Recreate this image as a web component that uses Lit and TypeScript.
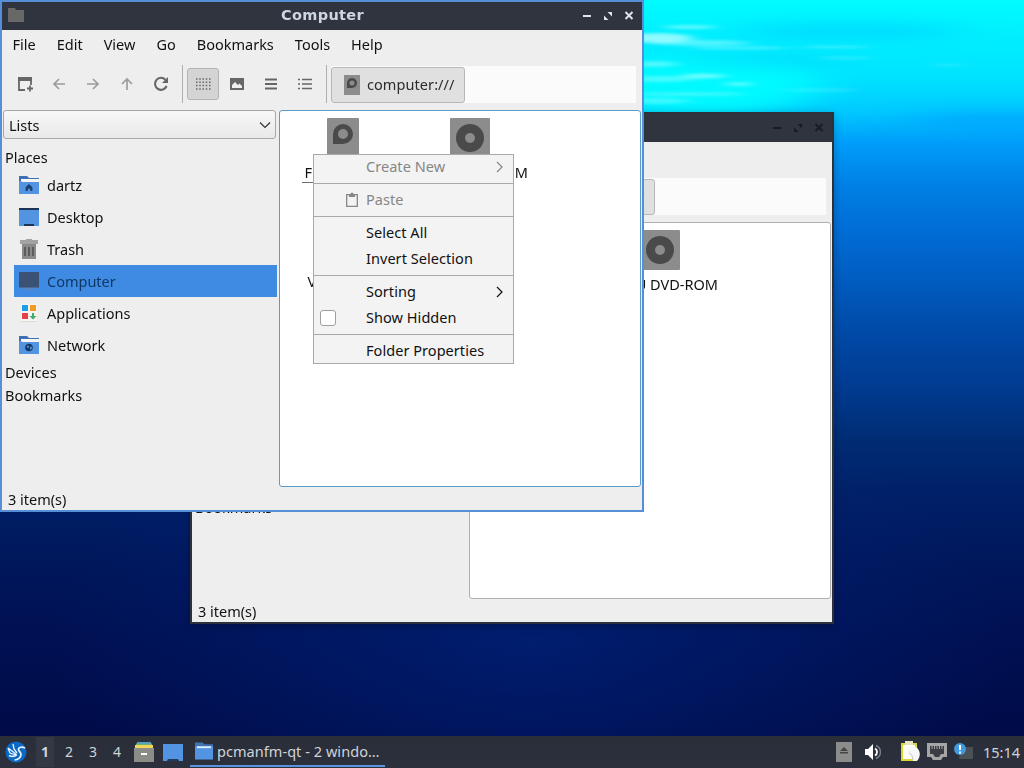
import {html, css, svg, LitElement} from 'lit';
import {customElement, property} from 'lit/decorators.js';
import {classMap} from 'lit/directives/class-map.js';

const folder = (overlay: unknown) => svg`
    <path d="M0 1h8l2 2h10v4H0z" fill="#3f6fb4" />
    <path d="M2 4h18v4H2z" fill="#f4f6fa" />
    <path d="M0 6h2l1 1h17v12H0z" fill="#5294e2" />
    ${overlay}
`;

const PLACES = [
    {
        name: 'dartz',
        icon: folder(svg`<path d="M10 9l-3.4 3.3V16h2.2v-2.2h2.4V16h2.2v-3.7z" fill="#1d4070" />`)
    },
    {
        name: 'Desktop',
        icon: svg`
            <path d="M0 1h20v18H0z" fill="#5294e2" />
            <path d="M0 1h20v2H0zM5 17h10v2H5z" fill="#1d3555" />
        `
    },
    {
        name: 'Trash',
        icon: svg`
            <path d="M7 0h6v1h6v4H1V1h6z" fill="#a3a3a3" />
            <path d="M3 5h14v15H3z" fill="#8a8a8a" />
            <path d="M6 8v9M10 8v9M14 8v9" stroke="#555" stroke-width="1.700" />
        `
    },
    {
        name: 'Computer',
        selected: true,
        icon: svg`
            <path d="M0 1h20v15H0z" fill="#3c5274" />
            <path d="M0 16h20v1H0z" fill="#4a6a98" />
            <path d="M5 17h10v1.500H5z" fill="#5e86bd" />
        `
    },
    {
        name: 'Applications',
        icon: svg`
            <path d="M2 1h16v18H2z" fill="#f6f4f0" />
            <path d="M2 18h16v1H2z" fill="#dedbd4" />
            <path d="M3 2h6v6H3z" fill="#1a9fe8" />
            <path d="M11 2h6v6h-6z" fill="#f29a25" />
            <path d="M3 10h6v6H3z" fill="#e8404a" />
            <path d="M13 10h2v3h2.500L14 16.500 10.500 13H13z" fill="#3fae6a" />
        `
    },
    {
        name: 'Network',
        icon: folder(svg`
            <circle cx="10" cy="12.500" r="3.800" fill="#173862" />
            <path d="M8 10.500l2 .5-.5 2-1.500-.5zM11 12l2-.5-.5 2.500-1.500 1z" fill="#5294e2" />
        `)
    }
];

const NAV_ICONS = [
    svg`
        <path d="M1 1h14v4H1z" />
        <path d="M2 4v10h6M14 4v5" fill="none" stroke="currentColor" stroke-width="1.800" />
        <path d="M13 9.500v6M10 12.500h6" stroke="currentColor" stroke-width="1.800" />
    `,
    svg`<path d="M14 8H3M8 3L3 8l5 5" fill="none" stroke="currentColor" stroke-width="1.700" />`,
    svg`<path d="M2 8h11M8 3l5 5-5 5" fill="none" stroke="currentColor" stroke-width="1.700" />`,
    svg`<path d="M8 14V3M3 8l5-5 5 5" fill="none" stroke="currentColor" stroke-width="1.700" />`,
    svg`
        <path d="M13.600 10a6 6 0 1 1-1.200-6.300" fill="none" stroke="currentColor" stroke-width="2.100" />
        <path d="M15 1v6H9z" />
    `
];

const VIEW_ICONS = [
    svg`<path d="M1 3h14.500M1 6.300h14.500M1 9.600h14.500M1 12.900h14.500" stroke="currentColor" stroke-width="1.500" stroke-dasharray="1.500 1.750" />`,
    svg`<path fill-rule="evenodd" d="M1 2h14v12H1zM3 12h10v-2l-2.500-2.500L9 9 6 6 3 9z" />`,
    svg`<path d="M2 3.500h12M2 8h12M2 12.500h12" stroke="currentColor" stroke-width="2" />`,
    svg`<path d="M1 3.500h2M1 8h2M1 12.500h2M5 3.500h10M5 8h10M5 12.500h10" stroke="currentColor" stroke-width="1.700" />`
];

@customElement('file-window')
export class FileWindow extends LitElement {
    @property({type: Boolean, reflect: true}) active = false;

    render() {
        return html`
            <div class="titlebar">
                <svg class="app-icon" viewBox="0 0 16 14"><path d="M0 0h7l1 2h8v12H0z" fill="#686868" /></svg>
                <span class="title">Computer</span>
                <svg class="controls" viewBox="0 0 54 12">
                    <path d="M1 6h8M43.500 2l7 7M50.500 2l-7 7" stroke="currentColor" stroke-width="2" />
                    <path d="M25.500 2H30v4.500zM22 5.500L26.500 10H22z" fill="currentColor" />
                </svg>
            </div>
            <div class="menubar">
                ${['File', 'Edit', 'View', 'Go', 'Bookmarks', 'Tools', 'Help'].map((label) => html`<span>${label}</span>`)}
            </div>
            <div class="toolbar">
                ${NAV_ICONS.map(
                    (icon, i) => html`
                        <div class=${classMap({tool: true, disabled: i > 0 && i < 4})}>
                            <svg viewBox="0 0 16 16">${icon}</svg>
                        </div>
                    `
                )}
                <div class="separator"></div>
                ${VIEW_ICONS.map(
                    (icon, i) => html`
                        <div class=${classMap({tool: true, pressed: i === 0})}>
                            <svg viewBox="0 0 16 16">${icon}</svg>
                        </div>
                    `
                )}
                <div class="separator"></div>
                <div class="path">
                    <div class="crumb">
                        <svg viewBox="0 0 16 20">
                            <path d="M0 0h16v20H0z" fill="#8c8c8c" />
                            <path d="M3 13V8a5 5 0 1 1 5 5z" fill="#4a4a4a" />
                            <circle cx="8" cy="8" r="2.500" fill="#8c8c8c" />
                        </svg>
                        <span>computer:///</span>
                    </div>
                </div>
            </div>
            <div class="body">
                <div class="side">
                    <div class="combo">
                        <span>Lists</span>
                        <svg viewBox="0 0 12 8"><path d="M1 1.500l5 5 5-5" fill="none" stroke="#333" stroke-width="1.200" /></svg>
                    </div>
                    <div class="group">Places</div>
                    ${PLACES.map(
                        (place) => html`
                            <div class=${classMap({place: true, selected: !!place.selected})}>
                                <svg viewBox="0 0 20 20">${place.icon}</svg>
                                <span>${place.name}</span>
                            </div>
                        `
                    )}
                    <div class="group">Devices</div>
                    <div class="group">Bookmarks</div>
                </div>
                <div class="view">
                    <div class="item">
                        <svg viewBox="0 0 40 40">
                            <rect x="4" width="32" height="40" rx="1" fill="#8c8c8c" />
                            <path d="M10 26V16a10 10 0 1 1 10 10z" fill="#4a4a4a" />
                            <circle cx="20" cy="16" r="5" fill="#8c8c8c" />
                        </svg>
                        <span class="focused">File System</span>
                    </div>
                    <div class="item">
                        <svg viewBox="0 0 40 40">
                            <rect width="40" height="40" rx="1" fill="#8c8c8c" />
                            <circle cx="20" cy="20" r="14" fill="#4a4a4a" />
                            <circle cx="20" cy="20" r="5" fill="#8c8c8c" />
                        </svg>
                        <span class="drive">QEMU DVD-ROM</span>
                    </div>
                    <div class="item">
                        <svg viewBox="0 0 40 40"><rect x="4" width="32" height="40" rx="1" fill="#8c8c8c" /></svg>
                        <span>VM Drives</span>
                    </div>
                </div>
            </div>
            <div class="status">3 item(s)</div>
        `;
    }

    static styles = [
        css`
            :host {
                box-sizing: border-box;
                display: block;
                width: 644px;
                height: 512px;
                border: 2px solid #2d313c;
                background: #eeeeef;
                color: #111;
                overflow: hidden;
            }

            :host([active]) {
                border-color: #568fd8;
            }

            svg {
                display: block;
                flex: none;
            }

            .titlebar {
                display: flex;
                align-items: center;
                height: 28px;
                background: #2f343f;
                color: #181b22;
            }

            :host([active]) .titlebar {
                color: #dce4ee;
            }

            .app-icon {
                width: 16px;
                height: 14px;
                margin: 0 0 2px 6px;
            }

            .title {
                flex: 1;
                padding: 0 0 2px 39px;
                text-align: center;
                font: bold 14.500px 'DejaVu Sans', sans-serif;
                letter-spacing: 0.35px;
                color: #cdd6e2;
            }

            .controls {
                width: 54px;
                height: 12px;
                margin: 0 6px 1px 0;
            }

            .menubar {
                display: flex;
                align-items: center;
                gap: 21px;
                height: 28px;
                padding: 0 0 2px 10.500px;
            }

            .toolbar {
                display: flex;
                align-items: center;
                gap: 2px;
                height: 48px;
                padding: 0 6px 0 7px;
            }

            .tool {
                box-sizing: border-box;
                display: grid;
                place-items: center;
                width: 32px;
                height: 32px;
                border-radius: 3px;
                color: #666;
            }

            .tool svg {
                width: 16px;
                height: 16px;
                fill: currentColor;
            }

            .tool.disabled {
                color: #9c9c9c;
            }

            .tool.pressed {
                border: 1px solid #b4b4b4;
                background: #d4d4d4;
            }

            .separator {
                width: 1px;
                height: 38px;
                margin: 0 2px 0 3px;
                background: #b0b0b0;
            }

            .path {
                flex: 1;
                height: 37px;
                background: #fbfbfb;
            }

            .crumb {
                box-sizing: border-box;
                display: flex;
                align-items: center;
                gap: 7px;
                width: 134px;
                height: 36px;
                margin-top: 1px;
                padding-left: 12px;
                border: 1px solid #b8b8b8;
                border-radius: 3px;
                background: #e0e0e0;
                color: #2c2c2c;
            }

            .crumb svg {
                width: 16px;
                height: 20px;
            }

            .crumb span {
                padding-bottom: 2px;
                letter-spacing: 0.07px;
            }

            .body {
                display: flex;
                gap: 2px;
                height: 377px;
                margin-top: 2px;
                padding: 0 1px;
            }

            .side {
                width: 274px;
            }

            .combo {
                box-sizing: border-box;
                display: flex;
                align-items: center;
                justify-content: space-between;
                width: 273px;
                height: 29px;
                margin-bottom: 7px;
                padding: 0 4px 0 5px;
                border: 1px solid #a8a8a8;
                border-radius: 3px;
                background: linear-gradient(#f7f7f7, #e9e9e9);
            }

            .combo svg {
                width: 12px;
                height: 8px;
            }

            .group {
                padding-left: 2px;
                line-height: 23px;
            }

            .place {
                display: flex;
                align-items: center;
                gap: 8px;
                height: 32px;
                margin-left: 11px;
                padding-left: 5px;
            }

            .place svg {
                width: 20px;
                height: 20px;
            }

            .place.selected {
                background: #3f8be3;
                color: #103866;
            }

            .view {
                box-sizing: border-box;
                display: grid;
                grid-template-columns: 125px 129px;
                grid-auto-rows: 109px;
                align-content: start;
                width: 362px;
                padding-top: 7px;
                border: 1px solid #b0b0b0;
                border-radius: 3px;
                background: #fff;
            }

            :host([active]) .view {
                border-color: #5b9bc9;
            }

            .item {
                display: flex;
                flex-direction: column;
                align-items: center;
                gap: 5px;
            }

            .item svg {
                width: 40px;
                height: 40px;
            }

            .item span {
                height: 19px;
                line-height: 19px;
                letter-spacing: 0.15px;
                white-space: nowrap;
            }

            .item .focused {
                padding: 0 2px;
                border-bottom: 1px solid #68707a;
                letter-spacing: 0;
            }

            .item .drive {
                padding-left: 2px;
                letter-spacing: 0;
            }

            .status {
                padding-left: 6px;
                line-height: 25px;
            }
        `
    ];
}

const arrow = html`
    <svg class="arrow" viewBox="0 0 8 12"><path d="M1 1l5 5-5 5" fill="none" stroke="currentColor" stroke-width="1.200" /></svg>
`;

@customElement('context-menu')
export class ContextMenu extends LitElement {
    render() {
        return html`
            <div class="entry disabled"><span class="mark"></span><span class="label">Create New</span>${arrow}</div>
            <hr />
            <div class="entry disabled">
                <span class="mark paste">
                    <svg viewBox="0 0 14 16">
                        <path d="M1.700 2.700h10.600v11.600H1.700z" fill="none" stroke="currentColor" stroke-width="1.300" />
                        <path d="M4 2h1.500a1.500 1.500 0 0 1 3 0H10v3H4z" />
                    </svg>
                </span>
                <span class="label">Paste</span>
            </div>
            <hr />
            <div class="entry"><span class="mark"></span><span class="label">Select All</span></div>
            <div class="entry"><span class="mark"></span><span class="label">Invert Selection</span></div>
            <hr />
            <div class="entry"><span class="mark"></span><span class="label">Sorting</span>${arrow}</div>
            <div class="entry">
                <span class="mark"><span class="check"></span></span><span class="label">Show Hidden</span>
            </div>
            <hr />
            <div class="entry"><span class="mark"></span><span class="label">Folder Properties</span></div>
        `;
    }

    static styles = [
        css`
            :host {
                display: block;
                width: 201px;
                height: 210px;
                background: #f3f3f4;
                box-shadow: inset 0 0 0 1px #a9a9a9;
                color: #111;
            }

            .entry {
                display: flex;
                align-items: center;
                height: 26px;
            }

            .disabled {
                color: #868686;
            }

            hr {
                height: 1px;
                margin: 3px 0;
                border: 0;
                background: #a9a9a9;
            }

            .mark {
                display: flex;
                width: 46px;
                padding-left: 7px;
            }

            .label {
                padding-bottom: 2px;
                letter-spacing: 0.05px;
            }

            .paste {
                width: 21px;
                padding-left: 32px;
            }

            .paste svg {
                width: 14px;
                height: 16px;
                fill: currentColor;
            }

            .check {
                box-sizing: border-box;
                width: 16px;
                height: 16px;
                border: 1px solid #a0a0a0;
                border-radius: 3px;
                background: #fff;
            }

            .arrow {
                width: 8px;
                height: 12px;
                margin: 0 10px 0 auto;
            }
        `
    ];
}

@customElement('task-panel')
export class TaskPanel extends LitElement {
    render() {
        return html`
            <svg class="start" viewBox="0 0 22 22">
                <circle cx="11" cy="11" r="10.500" fill="#0b68c4" />
                <path d="M3 7l8 6M3 7l2 5 6 2M8 3l1 5 3 4" fill="none" stroke="#e8f3ff" stroke-width="1.300" />
                <path d="M20 7c-3-1.500-6.500-1-6.500 1.500 0 2 2.500 2.500 2.500 5 0 3-3 5.500-6.500 5.500M4 14.500c3 1.500 6 1 8-1" fill="none" stroke="#e8f3ff" stroke-width="1.700" />
            </svg>
            <div class="desks">
                ${[1, 2, 3, 4].map((n) => html`<span class=${classMap({desk: true, current: n === 1})}>${n}</span>`)}
            </div>
            <svg class="launcher" viewBox="0 0 20 20">
                <path d="M3 0h14v3H3z" fill="#4f9bd9" />
                <path d="M2 1.500h16V5H2z" fill="#6bb36b" />
                <path d="M1 3h18v5H1z" fill="#f2d45c" />
                <path d="M0 6h20v14H0z" fill="#8b8b87" />
                <path d="M7 11h6v2H7z" fill="#fff" />
            </svg>
            <svg class="launcher" viewBox="0 0 20 20">
                <path d="M0 2h20v17h-4l-1-2H5l-1 2H0z" fill="#5294e2" />
                <path d="M5 17h10v2H5z" fill="#243a5a" />
            </svg>
            <div class="task">
                <svg viewBox="0 0 20 20">
                    <path d="M0 1h8l2 2h9v4H0z" fill="#4172b4" />
                    <path d="M0 5h19v14H0z" fill="#5294e2" />
                    <path d="M2 5h15v2H2z" fill="#dcebfb" />
                </svg>
                <span>pcmanfm-qt - 2 windo…</span>
            </div>
            <div class="tray">
                <svg class="eject" viewBox="0 0 16 20">
                    <path d="M0 0h16v20H0z" fill="#8c8c8c" />
                    <path d="M8 5l4 4H4zM4 10h8v1.500H4z" fill="#454545" />
                </svg>
                <svg class="volume" viewBox="0 0 16 16">
                    <path d="M0 5h3l5-5v16l-5-5H0z" fill="#fff" />
                    <path d="M10 4.500a4 4 0 0 1 0 7" fill="none" stroke="#fff" stroke-width="1.800" />
                    <path d="M11 1.500a7 7 0 0 1 0 13" fill="none" stroke="#777c86" stroke-width="1.500" />
                </svg>
                <svg class="clip" viewBox="0 0 20 22">
                    <path d="M1 2h16v18H1z" fill="#d9d63a" />
                    <path d="M3 4h12v14H3z" fill="#fffef4" />
                    <path d="M5 0h8v4H5z" fill="#e8e4c8" />
                    <path d="M8 8c3-4 8-3 10 0 3 4 2 9-1 12h-4c0-4-3-4-5-7z" fill="#f7f7f7" />
                    <path d="M9 12c2 1 4 3 4 7" fill="none" stroke="#c5c5c5" />
                </svg>
                <svg class="net" viewBox="0 0 20 18">
                    <path d="M0 0h20v14h-4l-2 3H6l-2-3H0z" fill="#a5a5a5" />
                    <path d="M3 3h14v8h-3l-2 3H8l-2-3H3z" fill="#3b3d42" />
                    <path d="M5 3v3M7.500 3v3M10 3v3M12.500 3v3M15 3v3" stroke="#a5a5a5" />
                </svg>
                <svg class="notice" viewBox="0 0 20 20">
                    <path d="M7 5h12v12H5z" fill="#4b5055" />
                    <circle cx="6" cy="7" r="6" fill="#3f9ade" />
                    <path d="M6 3v5M6 9.500v2" stroke="#fff" stroke-width="2" />
                </svg>
                <span class="clock">15:14</span>
            </div>
        `;
    }

    static styles = [
        css`
            :host {
                display: flex;
                align-items: center;
                height: 32px;
                background: linear-gradient(#292e39, #2c303c);
                color: #cfd3da;
            }

            svg {
                display: block;
                flex: none;
            }

            .start {
                width: 22px;
                height: 22px;
                margin: 0 9px 0 5px;
            }

            .desks {
                display: flex;
            }

            .desk {
                width: 18px;
                margin-right: 6px;
                text-align: center;
                font-size: 14px;
                line-height: 30px;
            }

            .current {
                background: #333844;
                font-weight: bold;
            }

            .launcher {
                width: 20px;
                height: 20px;
                margin: 0 7px 0 2px;
            }

            .task {
                box-sizing: border-box;
                display: flex;
                align-items: center;
                gap: 3px;
                width: 195px;
                height: 29px;
                padding-left: 5px;
                border-bottom: 2px solid #5a94df;
                letter-spacing: 0.05px;
                white-space: nowrap;
            }

            .task svg {
                width: 19px;
                height: 20px;
            }

            .tray {
                display: flex;
                align-items: center;
                margin-left: auto;
                padding-right: 4px;
            }

            .eject {
                width: 16px;
                height: 20px;
                margin-right: 13px;
            }

            .volume {
                width: 16px;
                height: 16px;
                margin-right: 19px;
            }

            .clip {
                width: 20px;
                height: 22px;
                margin-right: 7px;
            }

            .net {
                width: 20px;
                height: 18px;
                margin-right: 7px;
            }

            .notice {
                width: 20px;
                height: 20px;
                margin-right: 9px;
            }

            .clock {
                width: 37px;
                text-align: right;
            }
        `
    ];
}

// [cx, cy, rx, ry, opacity]
const GLINTS = [
    [690, 27, 26, 2, 0.5],
    [658, 38, 34, 5, 0.7],
    [700, 43, 50, 3, 0.4],
    [740, 48, 50, 1.5, 0.35],
    [655, 64, 22, 3, 0.4],
    [703, 76, 22, 2.5, 0.55],
    [660, 79, 35, 3, 0.35],
    [739, 84, 13, 2, 0.5],
    [690, 94, 55, 2, 0.3],
    [845, 58, 25, 1, 0.3],
    [835, 47, 35, 1, 0.35],
    [655, 101, 35, 3, 0.3],
    [948, 65, 14, 1, 0.25],
    [820, 90, 40, 1.5, 0.2]
];

@customElement('app-root')
export class AppRoot extends LitElement {
    render() {
        return html`
            <div class="desktop">
                <svg class="water" viewBox="0 0 1024 180">
                    <defs>
                        <filter id="soft" x="-20%" y="-100%" width="140%" height="300%"><feGaussianBlur stdDeviation="8 1.400" /></filter>
                        <filter id="wide" x="-20%" y="-100%" width="140%" height="300%"><feGaussianBlur stdDeviation="25 7" /></filter>
                    </defs>
                    <g filter="url(#wide)">
                        <ellipse cx="700" cy="85" rx="120" ry="30" fill="#00fcff" opacity=".9" />
                        <ellipse cx="850" cy="31" rx="110" ry="7" fill="#00c8ff" opacity=".6" />
                        <ellipse cx="760" cy="62" rx="80" ry="4" fill="#00c4f4" opacity=".5" />
                        <ellipse cx="1000" cy="120" rx="90" ry="10" fill="#0090ff" opacity=".4" />
                    </g>
                    <g filter="url(#soft)" fill="#c8ffff">
                        ${GLINTS.map(
                            ([cx, cy, rx, ry, o]) => svg`<ellipse cx=${cx} cy=${cy} rx=${rx} ry=${ry} opacity=${o} />`
                        )}
                    </g>
                </svg>
                <file-window class="back"></file-window>
                <file-window class="front" active></file-window>
                <context-menu class="menu"></context-menu>
            </div>
            <task-panel></task-panel>
        `;
    }

    static styles = [
        css`
            :host {
                display: flex;
                flex-direction: column;
                width: 1024px;
                height: 768px;
                overflow: hidden;
                font: 14.500px/20px 'Noto Sans', sans-serif;
            }

            .desktop {
                position: relative;
                height: 736px;
                background:
                    radial-gradient(ellipse 480px 260px at 530px 640px, rgba(0, 42, 138, 0.5), transparent),
                    linear-gradient(
                        #00fbff 0,
                        #00eeff 40px,
                        #00e4ff 75px,
                        #00cbff 110px,
                        #009dfa 143px,
                        #0080e4 185px,
                        #006fd8 225px,
                        #005cc0 280px,
                        #004aa8 330px,
                        #003c92 384px,
                        #002c74 440px,
                        #001f66 500px,
                        #00165a 570px,
                        #001052 640px,
                        #000b48 736px
                    );
            }

            .water {
                display: block;
                width: 1024px;
                height: 180px;
            }

            .back,
            .front,
            .menu {
                position: absolute;
                left: 0;
                top: 0;
            }

            .back {
                left: 190px;
                top: 112px;
                box-shadow: 0 2px 8px rgba(0, 0, 0, 0.25);
            }

            .menu {
                left: 313px;
                top: 154px;
            }
        `
    ];
}
